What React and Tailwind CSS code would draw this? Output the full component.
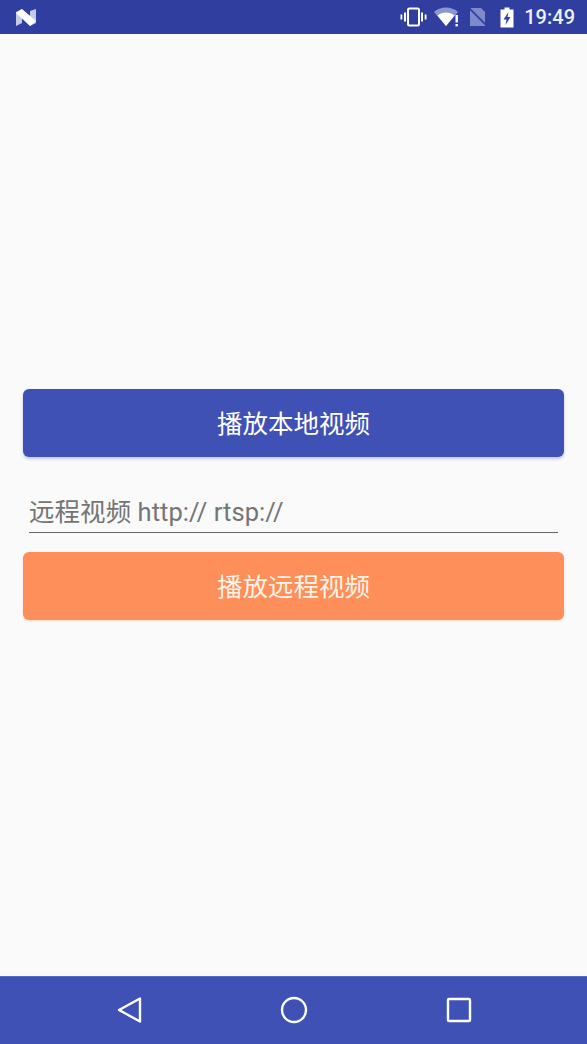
const fontStack = "font-['Roboto','Noto_Sans_CJK_SC',sans-serif]";

const StatusBar = () => (
  <div className="h-[34px] shrink-0 bg-[#303f9f] flex items-center justify-between pl-[15px] pr-[12px]">
    {/* notification logo */}
    <svg width="22" height="19" viewBox="0 0 22 19">
      <path d="M1 4 L7 1 V15 L1 18 Z" fill="#c5cae9" />
      <path d="M15 3 L21 1 V15 L15 18 Z" fill="#c5cae9" />
      <path d="M1 5 L7 1 L21 13 L15 18 Z" fill="#ffffff" />
    </svg>
    <div className="flex items-center">
      {/* vibrate */}
      <svg width="27" height="20" viewBox="0 0 27 20" className="mr-[7px]">
        <rect x="8" y="1.5" width="11" height="17" rx="1.5" fill="none" stroke="#fff" strokeWidth="2" />
        <rect x="4" y="5.5" width="2" height="9" fill="#fff" />
        <rect x="21" y="5.5" width="2" height="9" fill="#fff" />
        <rect x="0.5" y="7.5" width="1.8" height="5" fill="#fff" />
        <rect x="24.7" y="7.5" width="1.8" height="5" fill="#fff" />
      </svg>
      {/* wifi with alert */}
      <svg width="25" height="20" viewBox="0 0 25 20" className="mr-[9px]">
        <path d="M0 5 C6 -1 18 -1 24 5 L12 19 Z" fill="#8c96cf" />
        <path d="M3.5 8.5 C8 4.5 16 4.5 20.5 8.5 L12 19 Z" fill="#fff" />
        <rect x="21.5" y="8" width="2.4" height="7.5" fill="#fff" />
        <rect x="21.5" y="17" width="2.4" height="2.4" fill="#fff" />
      </svg>
      {/* no sim */}
      <svg width="20" height="20" viewBox="0 0 20 20" className="mr-[12px]">
        <path d="M2 1 H13 L17 5 V19 H2 Z" fill="#7f8ac8" />
        <path d="M0 0 L20 20" stroke="#303f9f" strokeWidth="1.8" />
      </svg>
      {/* battery charging */}
      <svg width="14" height="21" viewBox="0 0 14 21" className="mr-[10px]">
        <path d="M4.5 0.5 H9.5 V2.5 H13.5 V20.5 H0.5 V2.5 H4.5 Z" fill="#fff" />
        <path d="M8.5 5 L3.5 12.5 H6.5 L5.5 18 L10.5 10 H7.5 Z" fill="#303f9f" />
      </svg>
      <span className="font-['Roboto',sans-serif] text-[20px] leading-none font-medium text-[#eef0f8]">
        19:49
      </span>
    </div>
  </div>
);

const NavBar = () => (
  <div className="h-[68px] shrink-0 bg-[#3f51b5] border-t border-[#5a6ac0] pb-[1px] flex items-center justify-center gap-[138px]">
    <svg width="26" height="28" viewBox="0 0 26 28">
      <path d="M24 2.5 V25.5 L3 14 Z" fill="none" stroke="#fff" strokeWidth="2.4" strokeLinejoin="round" />
    </svg>
    <svg width="28" height="28" viewBox="0 0 28 28">
      <circle cx="14" cy="14" r="12" fill="none" stroke="#fff" strokeWidth="2.4" />
    </svg>
    <svg width="26" height="26" viewBox="0 0 26 26">
      <rect x="2" y="2" width="22" height="22" rx="1" fill="none" stroke="#fff" strokeWidth="2.4" />
    </svg>
  </div>
);

const App = () => {
  return (
    <div className={`h-[1044px] flex flex-col bg-[#fafafa] ${fontStack}`}>
      <StatusBar />
      <main className="flex-1 flex flex-col justify-center px-[23px] pb-[2px]">
        <button className="h-[68px] pt-[4px] rounded-[6px] bg-[#3f51b5] text-white text-[25.5px] shadow-[0_2px_3px_rgba(63,81,181,0.3)]">
          播放本地视频
        </button>
        <div className="mx-[6px] mt-[33px] mb-[19px] h-[43px] pt-[4px] border-b border-[#666666] flex items-center">
          <input
            placeholder="远程视频 http:// rtsp://"
            className="w-full bg-transparent outline-none text-[25.5px] tracking-[0.05px] placeholder:text-[#757575]"
          />
        </div>
        <button className="h-[68px] pt-[4px] rounded-[6px] bg-[#ff8f5a] text-[#fff3e6] text-[25.5px] shadow-[0_1px_2px_rgba(255,143,90,0.3)]">
          播放远程视频
        </button>
      </main>
      <NavBar />
    </div>
  );
};

export default App;
